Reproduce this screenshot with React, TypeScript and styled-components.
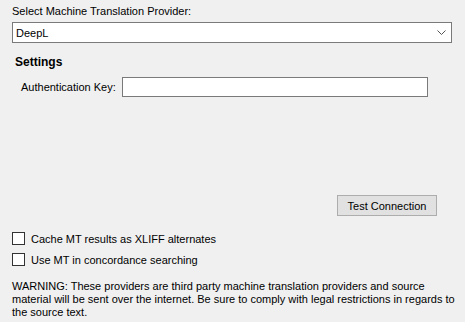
import React from 'react';
import styled, { createGlobalStyle } from 'styled-components';

const GlobalStyle = createGlobalStyle`
  html, body {
    margin: 0;
    padding: 0;
    background: #f0f0f0;
  }
  body {
    font-family: "Liberation Sans", Arial, sans-serif;
    font-size: 11px;
    color: #000;
  }
`;

const Page = styled.div`
  width: 465px;
  height: 322px;
  box-sizing: border-box;
  padding: 3px 0 0 12px;
  display: flex;
  flex-direction: column;
  overflow: hidden;
`;

const Caption = styled.div`
  height: 17px;
  line-height: 17px;
  margin-bottom: 2px;
`;

const Combo = styled.div`
  width: 440px;
  height: 21px;
  box-sizing: border-box;
  border: 1px solid #7a7a7a;
  background: #fff;
  display: flex;
  align-items: center;
  justify-content: space-between;
  padding: 0 5px 0 3px;
`;

const Heading = styled.div`
  font-weight: bold;
  font-size: 12px;
  margin: 10px 0 0 3px;
  height: 18px;
  line-height: 18px;
`;

const FieldRow = styled.div`
  display: flex;
  align-items: center;
  width: 440px;
  margin: 6px 0 0 9px;
  white-space: nowrap;
`;

const Input = styled.div`
  width: 306px;
  height: 20px;
  box-sizing: border-box;
  border: 1px solid #7a7a7a;
  background: #fff;
  margin-left: auto;
  margin-right: 33px;
  flex: none;
`;

const ButtonRow = styled.div`
  display: flex;
  justify-content: flex-end;
  width: 440px;
  margin: 98px 0 0 0;
  padding-right: 15px;
  box-sizing: border-box;
`;

const Button = styled.button`
  width: 100px;
  height: 21px;
  box-sizing: border-box;
  border: 1px solid #adadad;
  background: #e1e1e1;
  font: inherit;
  color: #000;
  padding: 0;
`;

const CheckRow = styled.label`
  display: flex;
  align-items: center;
  gap: 6px;
  height: 13px;
  margin-top: ${(p: { $top: number }) => p.$top}px;
`;

const Box = styled.span`
  width: 13px;
  height: 13px;
  box-sizing: border-box;
  border: 1px solid #333;
  background: #fff;
  flex: none;
`;

const Warning = styled.p`
  margin: 14px 0 0 0;
  line-height: 13px;
  width: 452px;
`;

const Chevron = () => (
  <svg width="9" height="6" viewBox="0 0 9 6">
    <polyline points="0.5,0.5 4.5,4.5 8.5,0.5" fill="none" stroke="#555" strokeWidth="1" />
  </svg>
);

export default function App() {
  return (
    <>
      <GlobalStyle />
      <Page>
        <Caption>Select Machine Translation Provider:</Caption>
        <Combo>
          <span>DeepL</span>
          <Chevron />
        </Combo>
        <Heading>Settings</Heading>
        <FieldRow>
          <span>Authentication Key:</span>
          <Input />
        </FieldRow>
        <ButtonRow>
          <Button>Test Connection</Button>
        </ButtonRow>
        <CheckRow $top={16}>
          <Box />
          <span>Cache MT results as XLIFF alternates</span>
        </CheckRow>
        <CheckRow $top={8}>
          <Box />
          <span>Use MT in concordance searching</span>
        </CheckRow>
        <Warning>
          WARNING: These providers are third party machine translation providers and source material will be
          sent over the internet. Be sure to comply with legal restrictions in regards to the source text.
        </Warning>
      </Page>
    </>
  );
}
